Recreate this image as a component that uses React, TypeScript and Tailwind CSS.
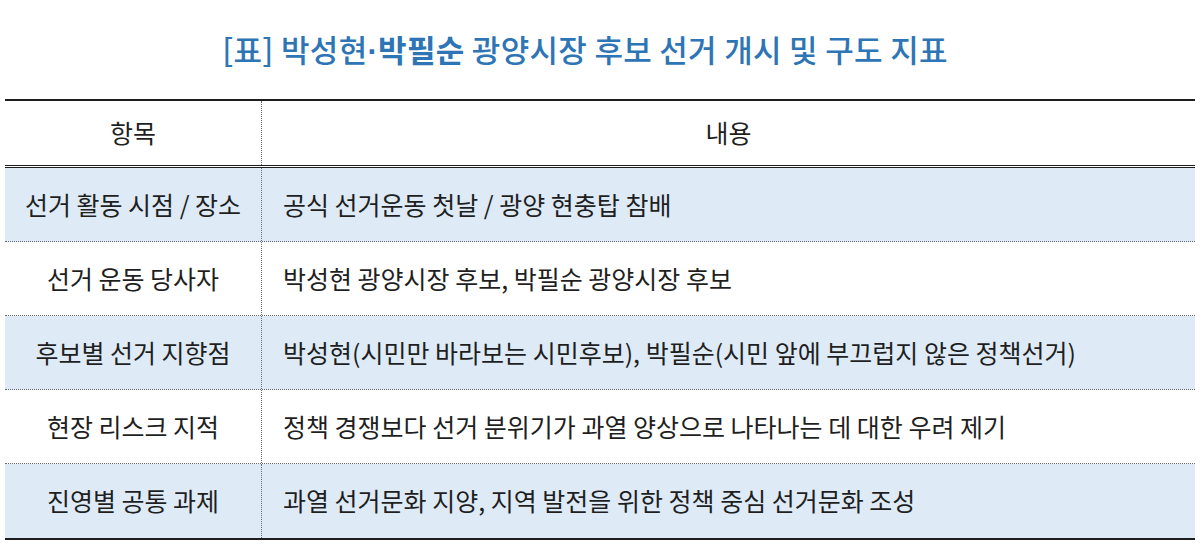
import React from 'react';

interface Row {
  label: string;
  content: string;
}

const ROWS: Row[] = [
  { label: '선거 활동 시점 / 장소', content: '공식 선거운동 첫날 / 광양 현충탑 참배' },
  { label: '선거 운동 당사자', content: '박성현 광양시장 후보, 박필순 광양시장 후보' },
  { label: '후보별 선거 지향점', content: '박성현(시민만 바라보는 시민후보), 박필순(시민 앞에 부끄럽지 않은 정책선거)' },
  { label: '현장 리스크 지적', content: '정책 경쟁보다 선거 분위기가 과열 양상으로 나타나는 데 대한 우려 제기' },
  { label: '진영별 공통 과제', content: '과열 선거문화 지양, 지역 발전을 위한 정책 중심 선거문화 조성' },
];

const FONT = { fontFamily: '"Malgun Gothic", "Noto Sans CJK KR", "Noto Sans", sans-serif' };

export default function App() {
  return (
    <div className="w-[1200px] h-[546px] bg-white overflow-hidden px-[5px]" style={FONT}>
      {/* Title */}
      <div className="h-[99px] flex items-center justify-center pr-[30px] pt-[2px]">
        <h1 className="text-[31px] font-medium text-[#2e75b6] tracking-[0.3px]">
          [표] 박성현<span className="font-['Liberation_Sans',sans-serif] font-bold">·</span>
          <span className="font-bold">박필순</span> 광양시장 후보 선거 개시 및 구도 지표
        </h1>
      </div>

      {/* Table */}
      <div className="border-t-2 border-b-2 border-[#1e1e1e] text-[#1f1f1f]">
        {/* Header */}
        <div className="flex h-[67px] border-b-[3px] border-double border-[#1e1e1e]">
          <div className="w-[257px] flex items-center justify-center border-r border-dotted border-[#6b6b6b] text-[25px]">
            항목
          </div>
          <div className="flex-1 flex items-center justify-center text-[25px]">내용</div>
        </div>

        {ROWS.map((row, i) => (
          <div
            key={row.label}
            className={`flex h-[74px] ${i % 2 === 0 ? 'bg-[#deebf7]' : 'bg-white'} ${
              i < ROWS.length - 1 ? 'border-b border-dotted border-[#6b6b6b]' : ''
            }`}
          >
            <div className="w-[257px] flex items-center justify-center border-r border-dotted border-[#6b6b6b] text-[25px]">
              {row.label}
            </div>
            <div className="flex-1 flex items-center pl-[21px] text-[25px]">{row.content}</div>
          </div>
        ))}
      </div>
    </div>
  );
}
